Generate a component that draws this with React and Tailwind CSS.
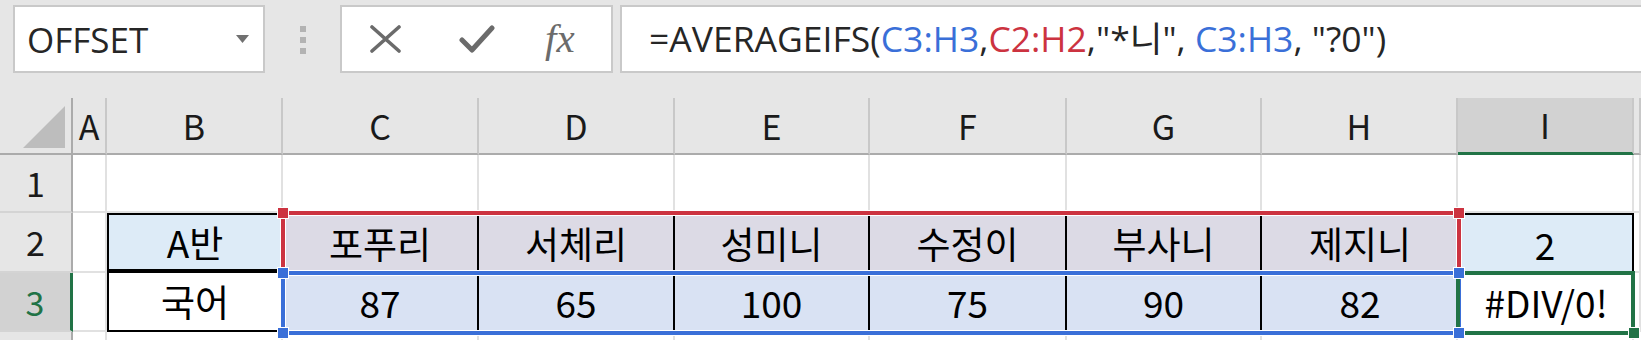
import React from "react";

const COLS = ["A", "B", "C", "D", "E", "F", "G", "H", "I"];

function Hdr({ children, className = "" }) {
  return (
    <div
      className={
        "flex items-center justify-center leading-none text-[34px] text-[#1a1a1a] [font-family:'Noto_Sans_CJK_KR','Noto_Sans',sans-serif] " +
        className
      }
    >
      {children}
    </div>
  );
}

function Cell({ children, className = "" }) {
  return (
    <div
      className={
        "flex items-center justify-center leading-none text-[37px] text-black [font-family:'Noto_Sans_CJK_KR','Noto_Sans',sans-serif] " +
        className
      }
    >
      {children}
    </div>
  );
}

const colHdr =
  "bg-[#e6e6e6] border-r-2 border-r-[#c8c8c8] border-b-2 border-b-[#ababab]";
const rowHdr =
  "bg-[#e6e6e6] border-r-2 border-r-[#ababab] border-b-2 border-b-[#d4d4d4]";
const plain = "bg-white border-r-2 border-b-2 border-[#e1e1e1]";

export default function App() {
  const names = ["포푸리", "서체리", "성미니", "수정이", "부사니", "제지니"];
  const scores = ["87", "65", "100", "75", "90", "82"];
  return (
    <div className="relative h-[340px] w-[1641px] overflow-hidden bg-white">
      {/* formula bar */}
      <div className="flex h-[98px] items-start bg-[#e6e6e6] pt-[5px]">
        <div className="ml-[13px] flex h-[68px] w-[252px] shrink-0 items-center border-2 border-[#c9c9c9] bg-white pl-[12px] pr-[14px]">
          <span className="flex-1 text-[35px] leading-none text-[#262626] [font-family:'Open_Sans','Noto_Sans',sans-serif]">
            OFFSET
          </span>
          <svg width="13" height="8" viewBox="0 0 13 8">
            <path d="M0 0 L13 0 L6.5 8 Z" fill="#707070" />
          </svg>
        </div>
        <div className="ml-[35px] mt-[21px] flex shrink-0 flex-col gap-[5px]">
          <div className="h-[6px] w-[6px] bg-[#b3b3b3]" />
          <div className="h-[6px] w-[6px] bg-[#b3b3b3]" />
          <div className="h-[6px] w-[6px] bg-[#b3b3b3]" />
        </div>
        <div className="ml-[34px] flex h-[68px] w-[273px] shrink-0 items-center border-2 border-[#c9c9c9] bg-white">
          <svg className="ml-[28px]" width="31" height="28" viewBox="0 0 31 28">
            <path d="M2 2 L29 26 M29 2 L2 26" stroke="#6b6b6b" strokeWidth="3.6" strokeLinecap="round" />
          </svg>
          <svg className="ml-[58px]" width="36" height="30" viewBox="0 0 36 30">
            <path d="M3 16 L13 26 L33 4" stroke="#6b6b6b" strokeWidth="5" fill="none" strokeLinecap="round" strokeLinejoin="round" />
          </svg>
          <span className="ml-[50px] mb-[2px] text-[41px] italic leading-none text-[#6b6b6b] [font-family:'Liberation_Serif','DejaVu_Serif',serif]">
            fx
          </span>
        </div>
        <div className="-mr-[20px] ml-[7px] flex h-[68px] flex-1 items-center border-2 border-[#c9c9c9] bg-white pl-[27px]">
          <span className="whitespace-pre text-[35.5px] leading-none text-[#262626] [font-family:'Open_Sans','Noto_Sans_CJK_KR',sans-serif]">
            =AVERAGEIFS(
            <span className="text-[#3a6fd8]">C3:H3</span>,
            <span className="text-[#cc3340]">C2:H2</span>
            {',"*니", '}
            <span className="text-[#3a6fd8]">C3:H3</span>
            {', "?0")'}
          </span>
        </div>
      </div>

      {/* grid */}
      <div className="grid h-[242px] grid-cols-[73px_34px_176px_196px_196px_195px_197px_195px_196px_176px_1fr] grid-rows-[57px_58px_60px_59px_1fr]">
        {/* header row */}
        <div className="relative bg-[#e6e6e6] border-r-2 border-r-[#ababab] border-b-2 border-b-[#ababab]">
          <svg className="absolute bottom-[5px] right-[6px]" width="42" height="42" viewBox="0 0 42 42">
            <path d="M42 0 L42 42 L0 42 Z" fill="#bdbdbd" />
          </svg>
        </div>
        {COLS.map((c) =>
          c === "I" ? (
            <Hdr key={c} className="bg-[#d2d2d2] border-r-2 border-r-[#c8c8c8] border-b-[3px] border-b-[#217346]">
              {c}
            </Hdr>
          ) : (
            <Hdr key={c} className={colHdr}>
              {c}
            </Hdr>
          )
        )}
        <Hdr className={colHdr} />

        {/* row 1 */}
        <Hdr className={rowHdr}>1</Hdr>
        {COLS.map((c) => (
          <Cell key={c} className={plain} />
        ))}
        <Cell className={plain} />

        {/* row 2 */}
        <Hdr className={rowHdr}>2</Hdr>
        <Cell className="bg-white border-r-2 border-b-2 border-[#e1e1e1]" />
        <Cell className="bg-[#ddebf7] border-2 border-b-4 border-black">A반</Cell>
        {names.map((n, i) => (
          <Cell
            key={n}
            className={
              i < 5
                ? "bg-[#dcdae5] border-r-2 border-r-black"
                : "bg-[#dcdae5]"
            }
          >
            {n}
          </Cell>
        ))}
        <Cell className="bg-[#ddebf7] border-t-2 border-r-2 border-black">2</Cell>
        <Cell className={plain} />

        {/* row 3 */}
        <Hdr className="bg-[#d2d2d2] border-r-[3px] border-r-[#217346] border-b-2 border-b-[#d4d4d4] text-[#217346]">
          3
        </Hdr>
        <Cell className="bg-white border-r-2 border-b-2 border-[#e1e1e1]" />
        <Cell className="bg-white border-x-2 border-b-2 border-black">국어</Cell>
        {scores.map((s, i) => (
          <Cell
            key={i}
            className={
              i < 5
                ? "bg-[#d9e2f3] border-r-2 border-r-black"
                : "bg-[#d9e2f3]"
            }
          >
            {s}
          </Cell>
        ))}
        <Cell className="bg-white">#DIV/0!</Cell>
        <Cell className={plain} />

        {/* row 4 (partial) */}
        <div className="bg-[#e6e6e6] border-r-2 border-r-[#ababab]" />
        {COLS.map((c) => (
          <div key={c} className="bg-white border-r-2 border-[#e1e1e1]" />
        ))}
        <div className="bg-white" />
      </div>

      {/* range borders (overlays) */}
      <div className="pointer-events-none absolute left-[281px] top-[211px] h-[64px] w-[1180px] border-4 border-[#cc3340] shadow-[0_0_0_1px_#ffffff,inset_0_0_0_1px_#ffffff]" />
      <div className="pointer-events-none absolute left-[281px] top-[271px] h-[64px] w-[1180px] border-4 border-[#3a6fd8] shadow-[0_0_0_1px_#ffffff,inset_0_0_0_1px_#ffffff]" />
      <div className="pointer-events-none absolute left-[1456px] top-[271px] h-[64px] w-[179px] border-4 border-[#217346]" />

      {/* handles */}
      <div className="absolute left-[277px] top-[207px] h-[12px] w-[12px] border border-white bg-[#cc3340]" />
      <div className="absolute left-[1453px] top-[207px] h-[12px] w-[12px] border border-white bg-[#cc3340]" />
      <div className="absolute left-[277px] top-[267px] h-[12px] w-[12px] border border-white bg-[#3a6fd8]" />
      <div className="absolute left-[1453px] top-[267px] h-[12px] w-[12px] border border-white bg-[#3a6fd8]" />
      <div className="absolute left-[277px] top-[327px] h-[12px] w-[12px] border border-white bg-[#3a6fd8]" />
      <div className="absolute left-[1453px] top-[327px] h-[12px] w-[12px] border border-white bg-[#3a6fd8]" />
      <div className="absolute left-[1628px] top-[327px] h-[12px] w-[12px] border border-white bg-[#217346]" />
    </div>
  );
}
